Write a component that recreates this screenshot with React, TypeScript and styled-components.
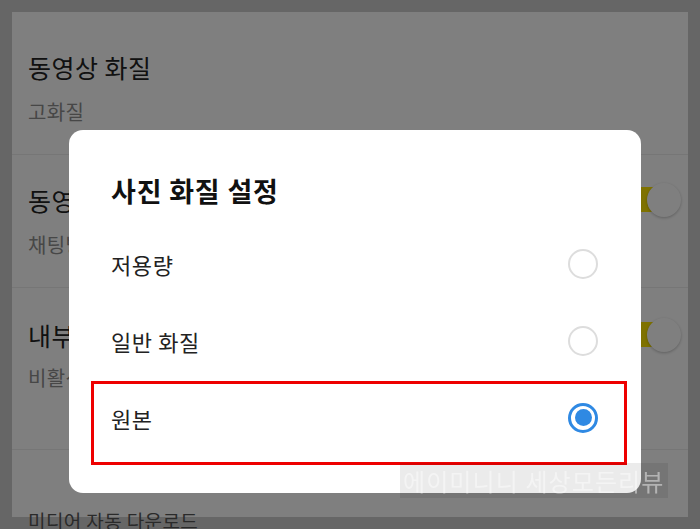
import React, { FC } from "react";
import styled, { createGlobalStyle } from "styled-components";

const GlobalStyle = createGlobalStyle`
  html, body {
    margin: 0;
    padding: 0;
    background: #cccccc;
    font-family: "Noto Sans CJK KR", "Noto Sans", sans-serif;
    overflow: hidden;
  }
`;

const Frame = styled.div`
  width: 700px;
  height: 529px;
  padding: 12px;
  box-sizing: border-box;
`;

const Panel = styled.div`
  width: 676px;
  height: 505px;
  background: #ffffff;
  display: flex;
  flex-direction: column;
`;

const Row = styled.div<{ $top: number; $height: number }>`
  display: flex;
  align-items: flex-start;
  justify-content: space-between;
  box-sizing: border-box;
  height: ${({ $height }) => $height}px;
  padding: ${({ $top }) => $top}px 7px 0 16px;
  border-bottom: 1px solid #ececec;
  flex-shrink: 0;
`;

const RowText = styled.div`
  display: flex;
  flex-direction: column;
`;

const RowTitle = styled.div`
  font-size: 25px;
  letter-spacing: 0.5px;
  line-height: 34px;
  color: #222222;
  white-space: nowrap;
`;

const RowSub = styled.div<{ $gap: number }>`
  font-size: 20px;
  letter-spacing: 0.4px;
  line-height: 26px;
  color: #8e8e8e;
  margin-top: ${({ $gap }) => $gap}px;
  white-space: nowrap;
`;

const SectionLabel = styled.div`
  font-size: 19px;
  letter-spacing: 0.4px;
  line-height: 26px;
  color: #555555;
  padding: 58px 16px 0;
  white-space: nowrap;
`;

const Switch = styled.div`
  position: relative;
  width: 60px;
  height: 34px;
  flex-shrink: 0;
`;

const Track = styled.div`
  position: absolute;
  left: 0;
  top: 4px;
  width: 44px;
  height: 25px;
  border-radius: 13px;
  background: #fee500;
`;

const Knob = styled.div`
  position: absolute;
  right: 0;
  top: 0;
  width: 34px;
  height: 34px;
  border-radius: 50%;
  background: #ffffff;
  box-shadow: 0 1px 3px rgba(0, 0, 0, 0.25);
`;

const Dim = styled.div`
  position: fixed;
  inset: 0;
  background: rgba(0, 0, 0, 0.5);
  display: flex;
  align-items: flex-start;
  padding: 130px 0 0 69px;
`;

const Dialog = styled.div`
  width: 572px;
  height: 363px;
  box-sizing: border-box;
  background: #ffffff;
  border-radius: 14px;
  padding: 43px 0 0;
  display: flex;
  flex-direction: column;
`;

const DialogTitle = styled.div`
  font-size: 27px;
  letter-spacing: 0.8px;
  font-weight: 700;
  line-height: 36px;
  color: #111111;
  padding: 0 42px;
  margin-bottom: 16px;
`;

const Option = styled.div<{ $marked?: boolean }>`
  position: relative;
  height: 77px;
  padding: 0 43px 0 42px;
  display: flex;
  align-items: center;
  justify-content: space-between;

  &::after {
    content: "";
    display: ${({ $marked }) => ($marked ? "block" : "none")};
    position: absolute;
    left: 22px;
    right: 14px;
    top: 2px;
    bottom: -9px;
    border: 3.5px solid #ee0000;
  }
`;

const OptionLabel = styled.span`
  font-size: 22px;
  letter-spacing: 0.6px;
  line-height: 30px;
  color: #222222;
`;

const Radio = styled.span<{ $checked?: boolean }>`
  width: 30px;
  height: 30px;
  box-sizing: border-box;
  border-radius: 50%;
  border: ${({ $checked }) =>
    $checked ? "3px solid #2f89e3" : "2px solid #dddddd"};
  display: flex;
  align-items: center;
  justify-content: center;

  &::before {
    content: "";
    display: ${({ $checked }) => ($checked ? "block" : "none")};
    width: 17px;
    height: 17px;
    border-radius: 50%;
    background: #2f89e3;
  }
`;

const Watermark = styled.div`
  position: fixed;
  left: 400px;
  top: 463px;
  width: 268px;
  height: 35px;
  background: rgba(0, 0, 0, 0.08);
  color: rgba(255, 255, 255, 0.45);
  font-size: 24px;
  letter-spacing: 1.1px;
  line-height: 35px;
  padding-left: 3px;
  box-sizing: border-box;
  white-space: nowrap;
  overflow: hidden;
`;

const Toggle: FC = () => (
  <Switch>
    <Track />
    <Knob />
  </Switch>
);

const options = [
  { label: "저용량", checked: false },
  { label: "일반 화질", checked: false },
  { label: "원본", checked: true },
];

const App: FC = () => (
  <>
    <GlobalStyle />
    <Frame>
      <Panel>
        <Row $top={38} $height={143}>
          <RowText>
            <RowTitle>동영상 화질</RowTitle>
            <RowSub $gap={15}>고화질</RowSub>
          </RowText>
        </Row>
        <Row $top={28} $height={133}>
          <RowText>
            <RowTitle>동영상 자동 재생</RowTitle>
            <RowSub $gap={15}>채팅방에서 동영상 자동 재생</RowSub>
          </RowText>
          <Toggle />
        </Row>
        <Row $top={30} $height={162}>
          <RowText>
            <RowTitle>내부 저장소 사용</RowTitle>
            <RowSub $gap={13}>비활성화</RowSub>
          </RowText>
          <Toggle />
        </Row>
        <SectionLabel>미디어 자동 다운로드</SectionLabel>
      </Panel>
    </Frame>
    <Dim>
      <Dialog>
        <DialogTitle>사진 화질 설정</DialogTitle>
        {options.map((o) => (
          <Option key={o.label} $marked={o.checked}>
            <OptionLabel>{o.label}</OptionLabel>
            <Radio $checked={o.checked} />
          </Option>
        ))}
      </Dialog>
    </Dim>
    <Watermark>에이미니니 세상모든리뷰</Watermark>
  </>
);

export default App;
